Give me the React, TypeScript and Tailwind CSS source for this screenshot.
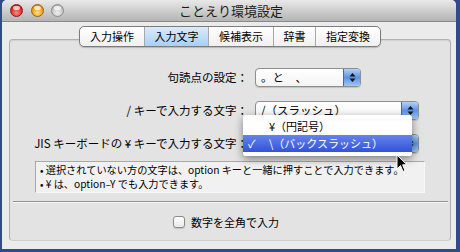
import React from "react";

const FONT = { fontFamily: '"Noto Sans CJK JP", "DejaVu Sans", sans-serif' };

function Light({ kind }: { kind: "red" | "orange" | "grey" }) {
  const bg =
    kind === "red"
      ? "bg-[radial-gradient(circle_at_50%_70%,#ff8a80_0%,#e0302a_55%,#a01010_100%)] border-[#8a1a1a]"
      : kind === "orange"
      ? "bg-[radial-gradient(circle_at_50%_70%,#ffe27a_0%,#f0a020_55%,#b06808_100%)] border-[#9a6010]"
      : "bg-[radial-gradient(circle_at_50%_70%,#eeeeee_0%,#c8c8c8_55%,#9a9a9a_100%)] border-[#8c8c8c]";
  return (
    <div className={`relative w-[13px] h-[13px] rounded-full border ${bg}`}>
      <div className="absolute left-[2px] top-[1px] w-[7px] h-[4px] rounded-full bg-white/70" />
    </div>
  );
}

function Arrows() {
  return (
    <svg width="7" height="11" viewBox="0 0 7 11">
      <path d="M3.5 1 L6.5 4.5 L0.5 4.5 Z" fill="#111" />
      <path d="M3.5 10 L6.5 6.5 L0.5 6.5 Z" fill="#111" />
    </svg>
  );
}

function Popup({ w, text, children }: { w: string; text: string; children?: React.ReactNode }) {
  return (
    <div className={`relative ${w} h-[19px] flex rounded-[4px] border border-[#8e8e8e] bg-gradient-to-b from-white to-[#f4f4f4] shadow-[0_1px_1px_rgba(0,0,0,0.15)]`}>
      <div className="flex-1 flex items-center pl-[5px] text-[11.5px] text-black whitespace-pre leading-none">{text}</div>
      <div className="w-[17px] h-full rounded-r-[3px] border-l border-[#4468a8] bg-gradient-to-b from-[#b4d0f6] via-[#5d93e4] to-[#9fc6f4] flex items-center justify-center">
        <Arrows />
      </div>
      {children}
    </div>
  );
}

export default function App() {
  const tabs = [
    { t: "入力操作", w: "w-[64px]" },
    { t: "入力文字", w: "w-[64px]", sel: true },
    { t: "候補表示", w: "w-[65px]" },
    { t: "辞書", w: "w-[42px]" },
    { t: "指定変換", w: "w-[65px]" },
  ];
  return (
    <div className="w-[460px] h-[252px] bg-[#2f4b8c] overflow-hidden" style={FONT}>
      <div className="relative ml-[2px] w-[454px] h-[249px] rounded-t-[5px] bg-[#ebebeb] flex flex-col overflow-hidden">
        {/* title bar */}
        <div className="h-[22px] flex items-center bg-gradient-to-b from-[#e9e9e9] to-[#b4b4b4] border-b border-[#8a8a8a]">
          <div className="w-[70px] flex items-center gap-[7.5px] pl-[8px]">
            <Light kind="red" />
            <Light kind="orange" />
            <Light kind="grey" />
          </div>
          <div className="flex-1 text-center text-[13px] text-[#1a1a1a] leading-none">ことえり環境設定</div>
          <div className="w-[66px]" />
        </div>

        {/* tab box */}
        <div className="ml-[7px] mt-[17px] w-[442px] h-[202px] rounded-[4px] border border-[#b0b0b0] border-b-[#cfcfcf] bg-[#e3e3e3] flex flex-col shadow-[inset_0_1px_1px_rgba(0,0,0,0.08)]">
          <div className="-mt-[14px] flex justify-center">
            <div className="flex h-[21px] rounded-[5px] border border-[#7c7c7c] bg-gradient-to-b from-white to-[#f0f0f0] overflow-hidden shadow-[0_1px_1px_rgba(0,0,0,0.2)]">
              {tabs.map((tb, i) => (
                <div
                  key={tb.t}
                  className={`${tb.w} flex items-center justify-center text-[11px] text-black leading-none ${i > 0 ? "border-l border-[#a8a8a8]" : ""} ${tb.sel ? "bg-gradient-to-b from-[#dcebfb] to-[#a9cff4]" : ""}`}
                >
                  {tb.t}
                </div>
              ))}
            </div>
          </div>

          <div className="mt-[21px] flex flex-col gap-[14px]">
            <div className="flex items-center h-[19px]">
              <div className="w-[238px] text-right text-[11.5px] text-black leading-none">句読点の設定：</div>
              <div className="ml-[7px]">
                <Popup w="w-[106px]" text="。と　、" />
              </div>
            </div>
            <div className="flex items-center h-[19px]">
              <div className="w-[238px] text-right text-[11.5px] text-black leading-none">/ キーで入力する文字：</div>
              <div className="ml-[7px]">
                <Popup w="w-[164px]" text="/（スラッシュ）" />
              </div>
            </div>
            <div className="flex items-center h-[19px]">
              <div className="w-[238px] text-right text-[11.5px] text-black leading-none">JIS キーボードの ¥ キーで入力する文字：</div>
              <div className="ml-[7px]">
                <Popup w="w-[164px]" text="">
                  {/* dropdown menu */}
                  <div className="absolute left-[-13px] top-[-20px] w-[169px] pt-[3px] pb-[4px] bg-white/95 rounded-[3px] shadow-[0_3px_8px_rgba(0,0,0,0.45)] z-10">
                    <div className="h-[17px] flex items-center text-[11px] text-black leading-none">
                      <span className="w-[26px]" />
                      <span>¥（円記号）</span>
                    </div>
                    <div className="h-[17px] flex items-center text-[11px] text-white leading-none bg-gradient-to-b from-[#6483ec] to-[#3452d8]">
                      <span className="w-[26px] pl-[5px]">✓</span>
                      <span>\（バックスラッシュ）</span>
                    </div>
                  </div>
                </Popup>
              </div>
            </div>
          </div>

          <div className="ml-[25px] mt-[8px] w-[390px] h-[32px] border border-[#a9a9a9] border-b-[#f8f8f8] border-r-[#f8f8f8] bg-[#f1f1f1] pl-[4px] pt-[1px] text-[10.2px] text-black leading-[14px]">
            <div>• 選択されていない方の文字は、option キーと一緒に押すことで入力できます。</div>
            <div>• ¥ は、option–Y でも入力できます。</div>
          </div>

          <div className="ml-[3px] mr-[2px] mt-[8px] h-[2px] border-t border-[#8f8f8f] border-b border-b-[#f7f7f7]" />

          <div className="mt-[13px] flex items-center justify-center gap-[6px] pr-[8px]">
            <div className="w-[12px] h-[12px] rounded-[3px] border border-[#8a8a8a] bg-gradient-to-b from-white to-[#e8e8e8] shadow-[0_1px_1px_rgba(0,0,0,0.15)]" />
            <div className="text-[11px] text-black leading-none">数字を全角で入力</div>
          </div>
        </div>

        {/* mouse cursor */}
        <svg className="absolute left-[394px] top-[154px] z-20" width="12" height="19" viewBox="0 0 12 19">
          <path d="M1 1 L1 15 L4.5 11.5 L7 17.5 L9 16.6 L6.6 10.8 L11 10.8 Z" fill="#000" stroke="#fff" strokeWidth="1" strokeLinejoin="round" />
        </svg>
      </div>
    </div>
  );
}
